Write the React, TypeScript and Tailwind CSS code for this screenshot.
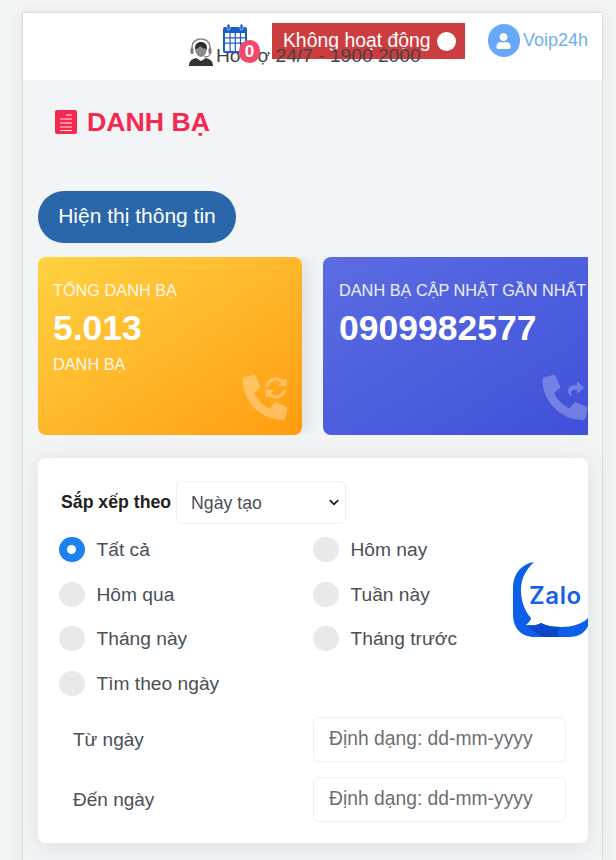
import { FaChevronDown, FaPhoneAlt, FaShare, FaSyncAlt, FaUser } from 'react-icons/fa'

const HeadsetAgent = () => (
  <svg viewBox="0 0 26 28" className="absolute left-[165px] top-[25px] h-[28px] w-[26px]">
    <path d="M1 28c0-5 3-7 7-8l5 3 5-3c4 1 7 3 7 8z" fill="#333" />
    <path d="M7 10c0-4 3-6 6-6s6 2 6 6c0 5-3 9-6 9s-6-4-6-9z" fill="#8a8a8a" />
    <path d="M7 11c0-5 3-7 6-7s6 2 6 7c-2 0-5-1-7-3-1 2-3 3-5 3z" fill="#2c2c2c" />
    <path d="M4 13V9c0-5 4-8 9-8s9 3 9 8v4" fill="none" stroke="#8a8a8a" strokeWidth="1.6" />
    <rect x="2.5" y="10" width="3" height="6" rx="1.5" fill="#777" />
    <rect x="20.5" y="10" width="3" height="6" rx="1.5" fill="#777" />
    <path d="M22 16c0 2-3 3-6 3" fill="none" stroke="#555" strokeWidth="1" />
  </svg>
)

const CalendarIcon = () => (
  <svg viewBox="0 0 26 30" className="h-[30px] w-[26px]">
    <rect x="1" y="3" width="24" height="26" rx="2" fill="#1a5fc9" />
    <rect x="5" y="0" width="3" height="6" rx="1.5" fill="#1a5fc9" stroke="#fff" strokeWidth="0.6" />
    <rect x="18" y="0" width="3" height="6" rx="1.5" fill="#1a5fc9" stroke="#fff" strokeWidth="0.6" />
    <path
      d="M3 9h4.5v4.2H3zM8.7 9h4v4.2h-4zM13.9 9h4v4.2h-4zM19.1 9H23v4.2h-3.9zM3 14.4h4.5v4.2H3zM8.7 14.4h4v4.2h-4zM13.9 14.4h4v4.2h-4zM19.1 14.4H23v4.2h-3.9zM3 19.8h4.5V27H3zM8.7 19.8h4V27h-4zM13.9 19.8h4V27h-4z"
      fill="#fff"
    />
  </svg>
)

const DocIcon = () => (
  <svg viewBox="0 0 22 24" className="h-[24px] w-[22px]">
    <rect width="22" height="24" rx="2" fill="#f6284f" />
    <path d="M11 5h6M5 9h12M5 13h12M5 17h12M5 20.500h12" stroke="#fff" strokeWidth="1.2" opacity="0.9" />
  </svg>
)

const ZaloLogo = () => (
  <svg viewBox="0 0 76 75" className="absolute right-[-1px] top-[104px] h-[75px] w-[76px]">
    <path
      d="M21 0C8 2 0 12 0 26v26c0 14 8 23 22 23h34c12 0 20-7 20-17v-3c-6 7-16 10-28 10-8 0-14-1-20-4-3 2-8 3-15 2 3-3 5-5 5-7C11 48 8 38 8 28 8 16 13 8 21 0z"
      fill="#0b5fe8"
    />
    <path d="M14 63c6 1 11 0 14-2 6 3 12 4 20 4-4 3-4 7-2 10H30c-6-3-12-7-16-12z" fill="#0a48c8" />
    <text x="16" y="42" fill="#1463e6" fontSize="24" fontWeight="600" letterSpacing="0.6" fontFamily="Inter, sans-serif">
      Zalo
    </text>
  </svg>
)

const radios = [
  ['Tất cả', true],
  ['Hôm nay', false],
  ['Hôm qua', false],
  ['Tuần này', false],
  ['Tháng này', false],
  ['Tháng trước', false],
  ['Tìm theo ngày', false],
] as const

const Radio = ({ label, on }: { label: string; on: boolean }) => (
  <label className="flex h-[25px] items-center">
    {on ? (
      <span className="flex h-[25px] w-[25.500px] items-center justify-center rounded-full bg-[#1d82f0]">
        <span className="h-[9px] w-[9px] rounded-full bg-white" />
      </span>
    ) : (
      <span className="h-[25px] w-[25.500px] rounded-full bg-[#e9e9e9]" />
    )}
    <span className="ml-[12px] pt-[2px] text-[19.200px] text-[#495057]">{label}</span>
  </label>
)

const DateRow = ({ label }: { label: string }) => (
  <div className="grid grid-cols-[254px_253px] items-center">
    <span className="pl-[14px] pt-[2px] text-[19px] text-[#495057]">{label}</span>
    <input
      placeholder="Định dạng: dd-mm-yyyy"
      className="h-[45px] w-full rounded-[6px] border border-[#eef0f2] bg-white px-[15px] text-[19.300px] outline-none placeholder:text-[#6c6f73]"
    />
  </div>
)

export default function App() {
  return (
    <div className="h-[860px] overflow-hidden bg-[#f3f4f4] pt-[12px] pl-[22px] pr-[13px] font-['Liberation_Sans',sans-serif]">
      <div className="h-[900px] border-x border-t border-[#dcdddf] bg-[#f3f4f5] shadow-[0_0_14px_rgba(0,0,0,0.06)]">
        <header className="relative flex h-[67px] items-start justify-end bg-white pr-[14px]">
          <HeadsetAgent />
          <span className="absolute left-[193px] top-[29px] z-10 text-[19.200px] whitespace-nowrap text-[#444]">Hỗ trợ 24/7 - 1900 2000</span>
          <div className="relative z-20 mt-[11px] mr-[24px] h-[30px] w-[26px]">
            <CalendarIcon />
            <span className="absolute left-[17px] top-[16px] flex h-[23px] w-[21px] items-center justify-center rounded-full bg-[#f5476a] text-[17px] font-bold text-white">
              0
            </span>
          </div>
          <div className="relative mt-[10px] flex h-[36px] w-[193px] items-center bg-[#cc3d3f] pl-[11px] text-[19.400px] whitespace-nowrap text-white">
            <span>Không hoạt động</span>
            <span className="ml-[6px] h-[19px] w-[19px] rounded-full bg-white" />
          </div>
          <div className="ml-[23px] mt-[11px] flex items-start">
            <span className="flex h-[33px] w-[32px] items-center justify-center rounded-full bg-[#66a9fb] text-white">
              <FaUser className="h-[16px] w-[15px]" />
            </span>
            <span className="ml-[3px] mt-[3px] text-[18px] text-[#6cb0f6]">Voip24h</span>
          </div>
        </header>

        <div className="pl-[15px] pr-[14px]">
          <div className="ml-[17px] mt-[26px] flex h-[32px] items-center gap-[10px]">
            <DocIcon />
            <h1 className="text-[26.700px] font-bold text-[#f6284f]">DANH BẠ</h1>
          </div>

          <button className="mt-[53px] block h-[52px] w-[198px] rounded-[26px] bg-[#2a66aa] pb-[2px] text-[21px] text-white">Hiện thị thông tin</button>

          <div className="mt-[14px] flex gap-[21px] overflow-hidden">
            <div className="relative h-[178px] w-[264px] shrink-0 rounded-[8px] bg-gradient-to-br from-[#ffd23f] to-[#ff9c0c] pl-[15px] pt-[23px] text-white shadow-[8px_0_14px_rgba(0,0,0,0.07)]">
              <p className="text-[16.300px] leading-[20px] opacity-90">TỔNG DANH BẠ</p>
              <p className="mt-[8px] text-[35.400px] leading-[40px] font-bold">5.013</p>
              <p className="mt-[6px] text-[16.300px] leading-[20px] opacity-90">DANH BẠ</p>
              <FaPhoneAlt className="absolute left-[204px] top-[118px] h-[45px] w-[46px] text-white opacity-30" />
              <FaSyncAlt className="absolute left-[226px] top-[120px] h-[22px] w-[24px] text-white opacity-30" />
            </div>
            <div className="relative h-[178px] w-[290px] shrink-0 rounded-[8px] bg-gradient-to-br from-[#5b6ce2] to-[#3f4fd9] pl-[16px] pt-[23px] text-white">
              <p className="text-[16.300px] leading-[20px] whitespace-nowrap opacity-90">DANH BẠ CẬP NHẬT GẦN NHẤT</p>
              <p className="mt-[8px] text-[35.500px] leading-[40px] font-bold">0909982577</p>
              <FaPhoneAlt className="absolute left-[219px] top-[118px] h-[45px] w-[46px] text-white opacity-25" />
              <FaShare className="absolute left-[241px] top-[124px] h-[16px] w-[24px] text-white opacity-25" />
            </div>
          </div>

          <section className="relative mt-[23px] h-[385px] overflow-hidden rounded-[8px] bg-white pl-[21px] pt-[23px] shadow-[0_4px_24px_rgba(60,70,110,0.12)]">
            <div className="ml-[2px] flex items-center">
              <span className="text-[17.700px] font-bold whitespace-nowrap text-[#222]">Sắp xếp theo</span>
              <div className="relative ml-[5px]">
                <select className="h-[43px] w-[170px] appearance-none rounded-[6px] border border-[#eef0f2] bg-white px-[14px] pt-[2px] text-[17.700px] text-[#495057]">
                  <option>Ngày tạo</option>
                </select>
                <FaChevronDown className="pointer-events-none absolute right-[5px] top-[16px] h-[11px] w-[14px] text-[#222]" />
              </div>
            </div>
            <div className="mt-[13px] grid grid-cols-[254px_254px] gap-y-[19.500px]">
              {radios.map(([label, on]) => (
                <Radio key={label} label={label} on={on} />
              ))}
            </div>
            <div className="mt-[21px] flex flex-col gap-[15px]">
              <DateRow label="Từ ngày" />
              <DateRow label="Đến ngày" />
            </div>
            <ZaloLogo />
          </section>
        </div>
      </div>
    </div>
  )
}
